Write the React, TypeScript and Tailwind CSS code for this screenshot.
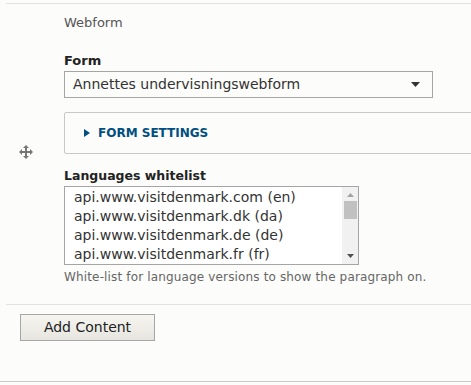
import React from "react";

const font = { fontFamily: '"DejaVu Sans", "Noto Sans", sans-serif' };

function MoveIcon() {
  return (
    <svg width="14" height="14" viewBox="0 0 14 14" className="block">
      <g fill="#777">
        <rect x="6" y="2" width="2" height="10" />
        <rect x="2" y="6" width="10" height="2" />
        <polygon points="7,0 4,3 10,3" />
        <polygon points="7,14 4,11 10,11" />
        <polygon points="0,7 3,4 3,10" />
        <polygon points="14,7 11,4 11,10" />
      </g>
    </svg>
  );
}

export default function App() {
  const langs = [
    "api.www.visitdenmark.com (en)",
    "api.www.visitdenmark.dk (da)",
    "api.www.visitdenmark.de (de)",
    "api.www.visitdenmark.fr (fr)",
  ];
  return (
    <div className="w-[471px] h-[385px] bg-[#fcfcfa] overflow-hidden text-[#333]" style={font}>
      <div className="pt-[3px] pl-[6px]">
        <div className="w-[520px] h-[301px] border-t border-[#e3e3df] flex">
          <div className="w-[58px] flex items-center pl-[13px]">
            <div className="mt-[-5px]">
              <MoveIcon />
            </div>
          </div>
          <div className="flex flex-col">
            <div className="mt-[11px] h-[16px] leading-[16px] text-[13px] text-[#555]">Webform</div>
            <div className="mt-[22px] h-[16px] leading-[16px] text-[13px] font-bold text-[#222]">Form</div>
            <div className="mt-[2px] w-[369px] h-[27px] border border-[#a5a5a5] bg-[#fcfcfa] flex items-center pl-[8px] pr-[12px]">
              <span className="flex-1 text-[14px] text-[#333]">Annettes undervisningswebform</span>
              <svg width="9" height="6" viewBox="0 0 9 6" className="mt-[1px]">
                <polygon points="0,0 9,0 4.5,5" fill="#333" />
              </svg>
            </div>
            <div className="mt-[14px] w-[420px] h-[42px] border border-[#c8c8c8] rounded-[2px] flex items-center pl-[19px]">
              <svg width="7" height="8" viewBox="0 0 7 8" className="mr-[7px]">
                <polygon points="0,0 6,4 0,8" fill="#004f80" />
              </svg>
              <span className="text-[12px] font-bold text-[#004f80]">FORM SETTINGS</span>
            </div>
            <div className="mt-[14px] h-[16px] leading-[16px] text-[12.5px] font-bold text-[#222]">Languages whitelist</div>
            <div className="mt-[2px] w-[295px] h-[79px] border border-[#a5a5a5] bg-white flex">
              <div className="flex-1 pl-[9px] pt-[1px] overflow-hidden">
                {langs.map((l) => (
                  <div key={l} className="h-[19px] leading-[19px] text-[14px] text-[#333] whitespace-nowrap">
                    {l}
                  </div>
                ))}
              </div>
              <div className="w-[16px] bg-[#f1f1f1] flex flex-col items-center">
                <svg width="7" height="4" viewBox="0 0 7 4" className="mt-[6px]">
                  <polygon points="3.5,0 7,4 0,4" fill="#a3a3a3" />
                </svg>
                <div className="mt-[4px] w-[13px] h-[18px] bg-[#c1c1c1]" />
                <div className="flex-1" />
                <svg width="7" height="4" viewBox="0 0 7 4" className="mb-[6px]">
                  <polygon points="0,0 7,0 3.5,4" fill="#505050" />
                </svg>
              </div>
            </div>
            <div className="mt-[3px] text-[12px] tracking-[0.15px] text-[#666] whitespace-nowrap">
              White-list for language versions to show the paragraph on.
            </div>
          </div>
        </div>
        <div className="w-[520px] border-t border-[#e3e3df] pt-[9px] pl-[14px] h-[77px]">
          <button className="w-[135px] h-[27px] border border-[#a6a6a6] bg-gradient-to-b from-[#f6f5f0] to-[#e6e5df] text-[14px] text-[#222] font-normal">
            Add Content
          </button>
        </div>
      </div>
      <div className="w-[471px] border-t border-[#c8c8c8]" />
    </div>
  );
}
